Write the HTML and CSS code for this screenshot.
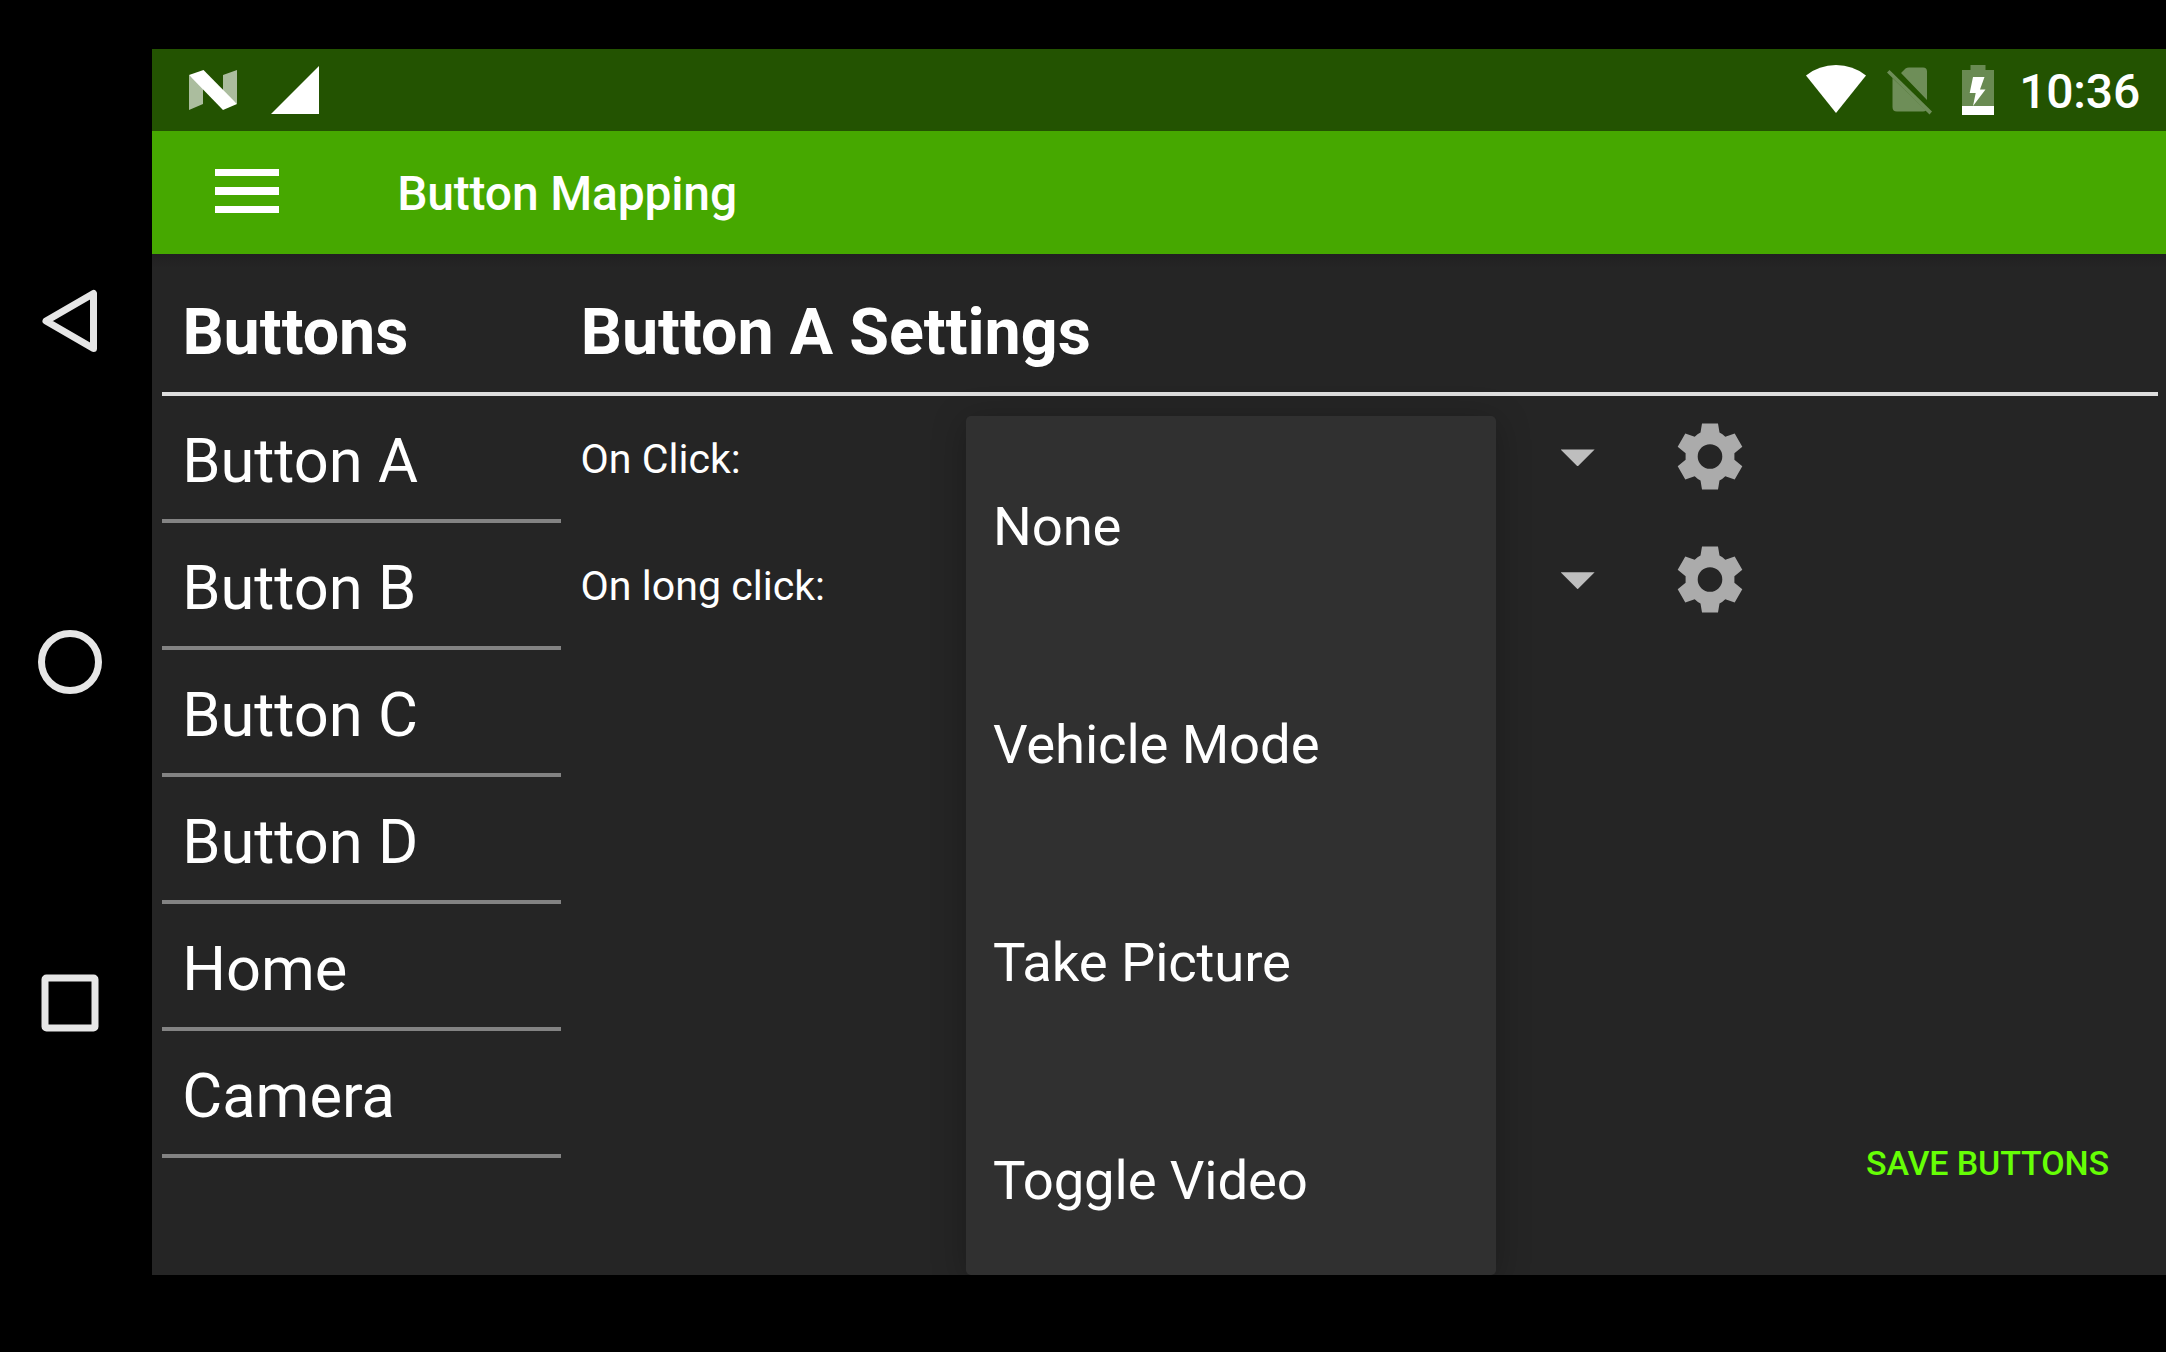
FILE: index.html
```html
<!DOCTYPE html>
<html lang="en">
<head>
<meta charset="utf-8">
<title>Button Mapping</title>
<link rel="stylesheet" href="styles.css">
</head>
<body>
<svg class="defs" width="0" height="0" aria-hidden="true">
  <symbol id="gear" viewBox="-33 -33.5 66 67">
    <path fill-rule="evenodd" d="M-8-33H8L9.5-24Q12.500-22.500 15.300-19.700L24.700-23 32.300-9.700 24.400-3.300V3.300L32.300 9.700 24.700 23 15.300 19.700Q12.500 22.500 9.500 24L8 33H-8L-9.500 24Q-12.500 22.500-15.300 19.700L-24.700 23-32.300 9.700-24.400 3.300V-3.300L-32.300-9.700-24.700-23-15.300-19.700Q-12.500-22.500-9.500-24ZM0-12.300A12.300 12.300 0 1 0 0 12.300 12.300 12.300 0 1 0 0-12.300Z"/>
  </symbol>
</svg>
<div class="device">
  <nav class="navbar">
    <svg class="nav-icon" viewBox="0 0 70 70"><path d="M58.500 7.500V62.500L11 35Z" /></svg>
    <svg class="nav-icon" viewBox="0 0 70 70"><circle cx="35" cy="35" r="28.500"/></svg>
    <svg class="nav-icon" viewBox="0 0 70 70"><rect x="10" y="10" width="50" height="50" rx="1.500"/></svg>
  </nav>
  <div class="screen">
    <header class="statusbar">
      <svg class="ic-n" viewBox="0 0 48 40"><path opacity=".62" d="M0 5V40L14 34V16ZM48 34V0L34 5V23Z"/><path d="M0 5 14.500 0 48 34 34 40Z"/></svg>
      <svg class="ic-cell" viewBox="0 0 48 48"><path d="M48 0V48H0Z"/></svg>
      <div class="status-right">
        <svg class="ic-wifi" viewBox="0 0 60 48"><path d="M0 10.500Q13 0 30 0T60 10.500L30 48Z"/></svg>
        <svg class="ic-sim" viewBox="0 0 46 48"><path d="M14 6 18.500 1.500Q20 .5 22 .5H36Q40 .5 40 4.500V33ZM5.500 11 39 43.500Q38 44.500 36 44.500H10Q5.500 44.500 5.500 40Z"/><path d="M2.500 3 45 44.500 42.500 47.500 0 5.500Z"/></svg>
        <svg class="ic-batt" viewBox="0 0 32 50"><path opacity=".32" d="M8.500 0H23.500V5H32V41H0V5H8.500Z"/><path d="M0 41H32V50H0ZM11 12H22.500L18 24.500H23.500L11 41 13.700 28H7.700Z"/></svg>
        <span class="clock">10:36</span>
      </div>
    </header>
    <div class="toolbar">
      <div class="menu"><i></i><i></i><i></i></div>
      <h1 class="title">Button Mapping</h1>
    </div>
    <main class="content">
      <div class="heads">
        <h2 class="head head-left">Buttons</h2>
        <h2 class="head head-right">Button A Settings</h2>
      </div>
      <div class="columns">
        <ul class="list">
          <li>Button A</li>
          <li>Button B</li>
          <li>Button C</li>
          <li>Button D</li>
          <li>Home</li>
          <li>Camera</li>
        </ul>
        <section class="settings">
          <div class="labels"><span class="l1">On Click:</span><span class="l2">On long click:</span></div>
          <div class="controls">
            <div class="control"><i class="caret"></i><svg class="gear"><use href="#gear"/></svg></div>
            <div class="control"><i class="caret"></i><svg class="gear"><use href="#gear"/></svg></div>
          </div>
          <button class="save">SAVE BUTTONS</button>
        </section>
      </div>
      <ul class="popup">
        <li class="p1">None</li>
        <li class="p2">Vehicle Mode</li>
        <li class="p3">Take Picture</li>
        <li class="p4">Toggle Video</li>
      </ul>
    </main>
  </div>
</div>
</body>
</html>
```
FILE: styles.css
```css
* { box-sizing: border-box; margin: 0; padding: 0; }
body { background: #000; color: #fff; font-family: Roboto, sans-serif; overflow: hidden; }
ul { list-style: none; }
svg { display: block; flex: none; }
.defs { position: absolute; }
.device { display: flex; width: 2166px; height: 1352px; padding: 49px 0 77px; }

.navbar { flex: none; width: 151.600px; display: flex; flex-direction: column; align-items: center; gap: 271px; padding: 237px 12px 0 0; }
.nav-icon { width: 70px; height: 70px; fill: none; stroke: #e6e6e6; stroke-width: 7; stroke-linejoin: round; }

.screen { flex: 1; min-width: 0; display: flex; flex-direction: column; background: #252525; }
.statusbar { flex: none; height: 82px; display: flex; background: #235301; padding: 16px 26px 0 37px; fill: #fff; }
.ic-n { width: 48px; height: 40px; margin-top: 5px; }
.ic-cell { width: 48px; height: 48px; margin: 1px 0 0 34px; }
.status-right { margin-left: auto; display: flex; }
.ic-wifi { width: 60px; height: 48px; }
.ic-sim { width: 46px; height: 48px; margin: 2px 0 0 21px; opacity: .34; }
.ic-batt { width: 32px; height: 50px; margin-left: 29.500px; }
.clock { font-size: 48px; font-weight: 500; line-height: 56px; letter-spacing: -.2px; margin: -1px 0 0 25px; }

.toolbar { flex: none; height: 122.500px; display: flex; background: #46a800; padding-left: 63.400px; }
.menu { width: 64px; display: flex; flex-direction: column; gap: 11px; margin-top: 38px; }
.menu i { height: 7.300px; background: #fff; }
.title { font-size: 48px; font-weight: 500; line-height: 56px; letter-spacing: -.18px; margin: 35px 0 0 118.200px; white-space: nowrap; }

.content { flex: 1; position: relative; display: flex; flex-direction: column; padding: 0 8.500px 0 10px; background: linear-gradient(#212021, #252525 14px); }
.heads { height: 142px; display: flex; border-bottom: 4px solid #dedede; padding: 40px 0 0 20.800px; }
.head { font-size: 64.600px; font-weight: 700; line-height: 76px; white-space: nowrap; }
.head-left { width: 398.300px; }
.columns { flex: 1; display: flex; }
.list { flex: none; width: 399px; }
.list li { height: 127.100px; border-bottom: 4px solid #838383; padding-left: 20.600px; font-size: 61.400px; line-height: 131px; }
.settings { flex: 1; display: flex; padding-left: 20px; }
.labels { width: 980px; display: flex; flex-direction: column; font-size: 41.100px; line-height: 127.400px; }
.controls { width: 240px; display: flex; flex-direction: column; }
.control { height: 122.800px; display: flex; align-items: center; gap: 82.700px; }
.caret { width: 34px; height: 17px; background: #bebebe; clip-path: polygon(0 0, 100% 0, 50% 100%); margin-top: 2px; }
.gear { width: 66px; height: 67px; fill: #ababab; }
.save { align-self: flex-end; margin: 0 48.500px 92px auto; background: none; border: 0; color: #66ff05; font: 500 34px/40px Roboto, sans-serif; letter-spacing: -.12px; white-space: nowrap; }

/* Dropdown that covers the spinners while it is open */
.popup { position: absolute; left: 814.400px; top: 162.500px; width: 530px; height: 859px; padding-top: 1px; background: #303030; border-radius: 5px; box-shadow: 0 6px 34px rgba(0, 0, 0, .27); clip-path: inset(-30px -60px 0 -60px); }
.popup li { height: 218px; line-height: 218px; padding-left: 27px; font-size: 54.500px; letter-spacing: -.15px; white-space: nowrap; }
```
